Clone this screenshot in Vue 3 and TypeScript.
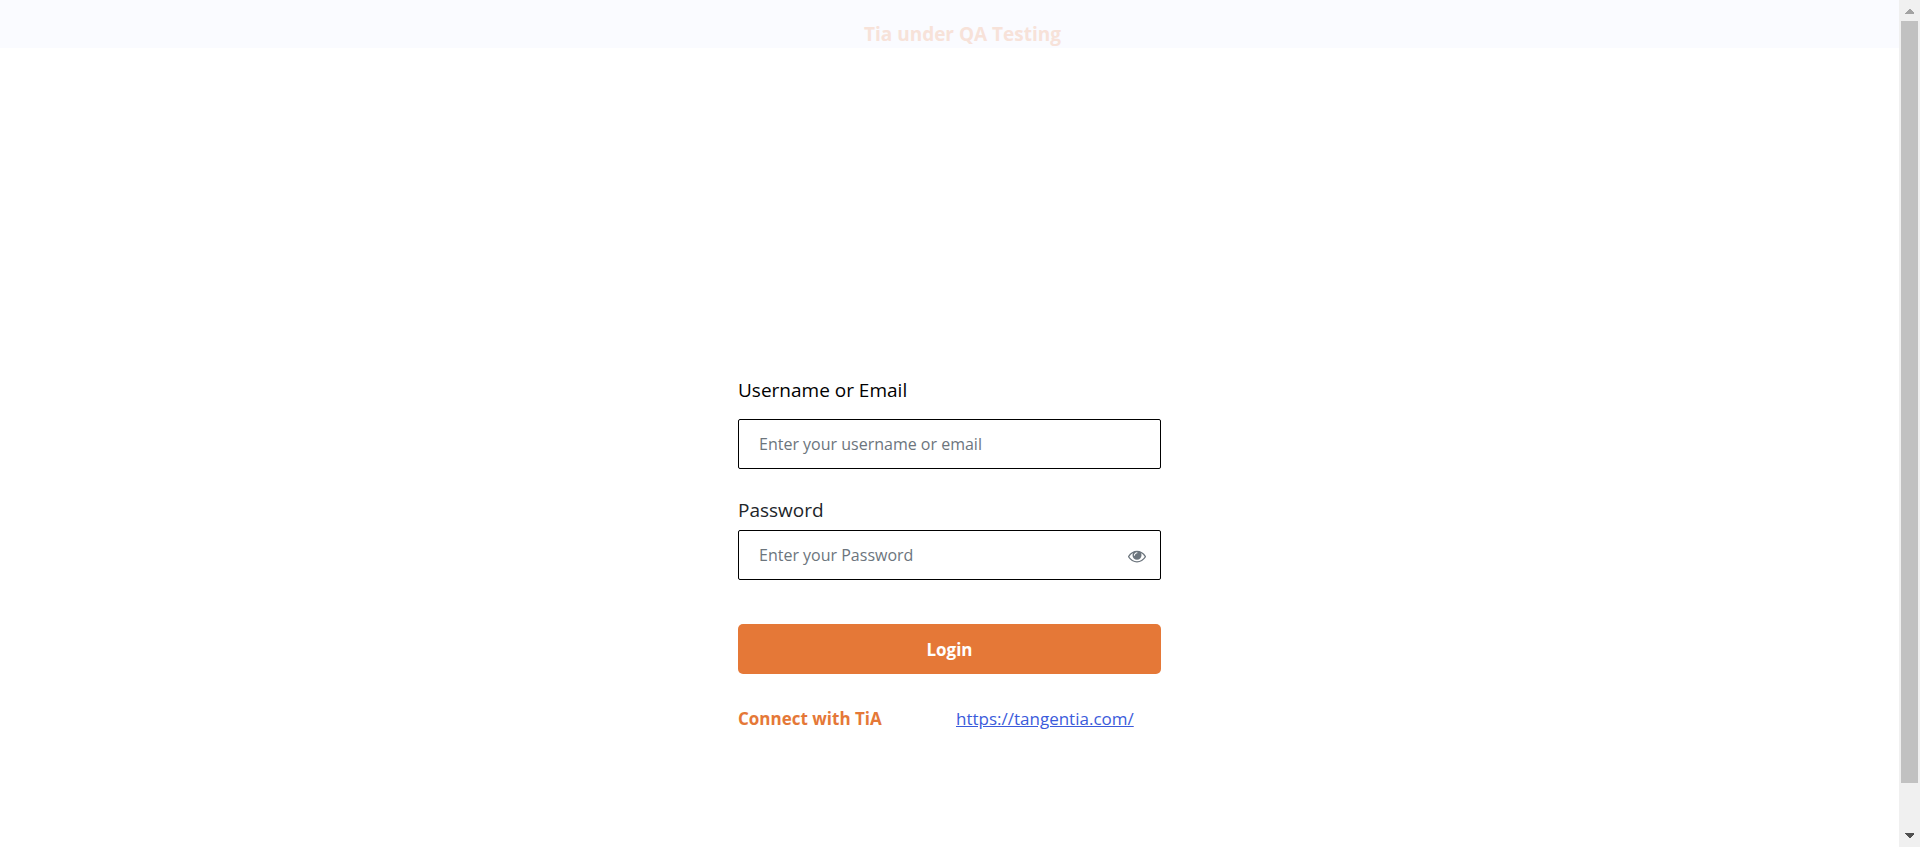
<script setup lang="ts">
import { ref } from 'vue'

const username = ref('')
const password = ref('')
const showPassword = ref(false)
</script>

<template>
  <div class="shell">
    <div class="page">
      <header class="banner">
        <h1 class="banner-title">Tia under QA Testing</h1>
      </header>
      <main class="content">
        <form class="login" @submit.prevent>
          <label class="label label-username" for="username">Username or Email</label>
          <input id="username" v-model="username" class="field" type="text" placeholder="Enter your username or email" />
          <label class="label label-password" for="password">Password</label>
          <div class="password">
            <input
              id="password"
              v-model="password"
              class="field"
              :type="showPassword ? 'text' : 'password'"
              placeholder="Enter your Password"
            />
            <button class="reveal" type="button" aria-label="Show password" @click="showPassword = !showPassword">
              <svg viewBox="0 0 1792 1792" aria-hidden="true">
                <path
                  d="M1664 960q-152-236-381-353 61 104 61 225 0 185-131.500 316.500t-316.500 131.500-316.500-131.500-131.500-316.500q0-121 61-225-229 117-381 353 133 205 333.500 326.500t434.500 121.500 434.500-121.500 333.500-326.500zm-720-384q0-20-14-34t-34-14q-125 0-214.500 89.500t-89.500 214.500q0 20 14 34t34 14 34-14 14-34q0-86 61-147t147-61q20 0 34-14t14-34zm848 384q0 34-20 69-140 230-376.500 368.500t-499.500 138.500-499.500-139-376.500-368q-20-35-20-69t20-69q140-229 376.500-368t499.500-139 499.500 139 376.500 368q20 35 20 69z"
                />
              </svg>
            </button>
          </div>
          <button class="submit" type="submit">Login</button>
          <div class="connect">
            <span class="connect-title">Connect with TiA</span>
            <a class="connect-link" href="https://tangentia.com/">https://tangentia.com/</a>
          </div>
        </form>
      </main>
    </div>
    <div class="scrollbar" aria-hidden="true">
      <svg class="arrow" viewBox="0 0 21 21" shape-rendering="crispEdges"><path d="M6 14V13L10 9H11L15 13V14Z" fill="#a3a3a3" /></svg>
      <div class="track"><div class="thumb"></div></div>
      <svg class="arrow" viewBox="0 0 21 21" shape-rendering="crispEdges"><path d="M6 7V8L10 12H11L15 8V7Z" fill="#505050" /></svg>
    </div>
  </div>
</template>

<style>
body {
  margin: 0;
  background: #fff;
}
</style>

<style scoped>
.shell {
  display: flex;
  min-height: 100vh;
  font-family: 'Segoe UI', 'Open Sans', 'Noto Sans', sans-serif;
  color: #212529;
}
.page {
  flex: 1;
  min-width: 0;
}
.banner {
  box-sizing: border-box;
  height: 48px;
  padding: 20px 0 0 26px;
  background: #fafbff;
}
.banner-title {
  margin: 0;
  font-size: 19px;
  line-height: 28px;
  font-weight: 700;
  text-align: center;
  color: #f7e2d9;
}
.content {
  display: flex;
  justify-content: center;
  padding: 328px 16px 0;
}
.login {
  display: flex;
  flex-direction: column;
  width: 100%;
  max-width: 423px;
}
.label {
  font-size: 19px;
  line-height: 28px;
}
.label-username {
  margin-bottom: 15px;
  color: #000;
}
.label-password {
  margin: 27px 0 6px;
}
.field {
  box-sizing: border-box;
  width: 100%;
  height: 50px;
  padding: 0 20px;
  border: 1px solid #000;
  border-radius: 2px;
  background: #fff;
  font: inherit;
  font-size: 16px;
  color: #212529;
}
.field::placeholder {
  color: #6c757d;
  opacity: 1;
}
.password {
  position: relative;
}
.password .field {
  display: block;
  padding-right: 48px;
}
.reveal {
  position: absolute;
  top: 16px;
  right: 14px;
  width: 20px;
  height: 20px;
  padding: 1px;
  border: 0;
  background: none;
  cursor: pointer;
}
.reveal svg {
  display: block;
  width: 18px;
  height: 18px;
  fill: #6c757d;
}
.submit {
  height: 50px;
  margin-top: 44px;
  border: 0;
  border-radius: 5px;
  background: #e57837;
  font: inherit;
  font-size: 17px;
  font-weight: 700;
  color: #fff;
  cursor: pointer;
}
.connect {
  display: grid;
  grid-template-columns: 218px 1fr;
  margin-top: 32px;
  font-size: 17px;
  line-height: 26px;
}
.connect-title {
  font-weight: 700;
  color: #e57837;
}
.connect-link {
  color: #3b5bdb;
}
.scrollbar {
  display: flex;
  flex-direction: column;
  width: 21px;
  background: #f0f0f0;
}
.arrow {
  display: block;
  width: 21px;
  height: 21px;
}
.track {
  flex: 1;
  padding: 0 2px;
}
.thumb {
  height: 762px;
  background: #c1c1c1;
}
</style>
